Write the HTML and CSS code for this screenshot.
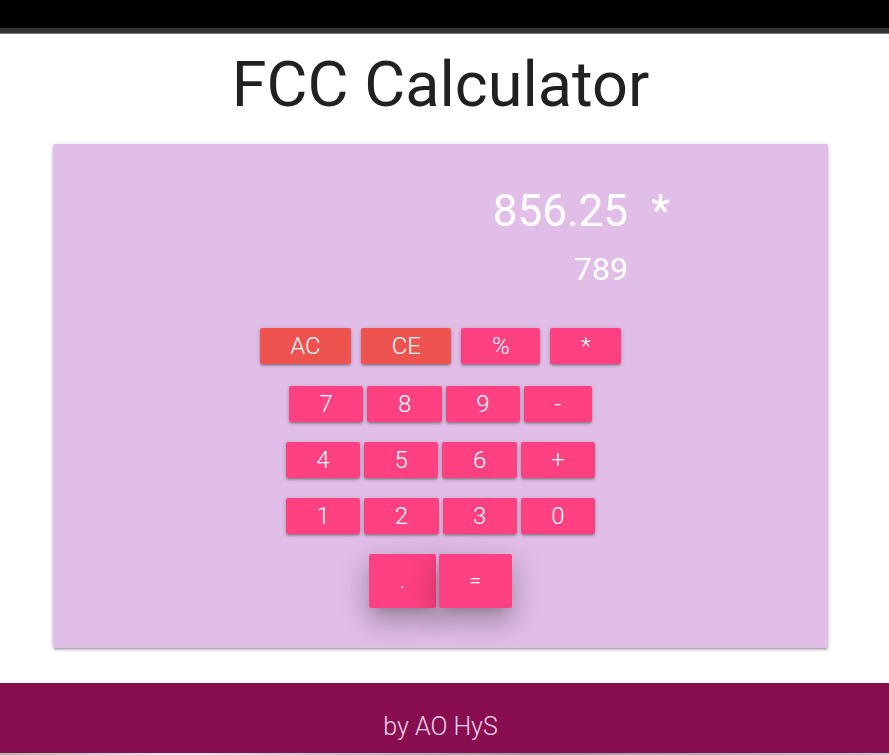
FILE: index.html
```html
<!DOCTYPE html>
<html lang="en">
<head>
<meta charset="utf-8">
<title>FCC Calculator</title>
<link rel="stylesheet" href="styles.css">
</head>
<body>
<div class="chrome">
  <div class="chrome-top"></div>
  <div class="chrome-band"></div>
  <div class="chrome-line"></div>
</div>
<main class="page">
  <h1 class="title">FCC Calculator</h1>
  <section class="card">
    <div class="display">
      <span class="value main">856.25</span>
      <span class="operator">*</span>
      <span class="value sub">789</span>
    </div>
    <div class="keys">
      <div class="row row-top">
        <button class="btn btn-red">AC</button>
        <button class="btn btn-red">CE</button>
        <button class="btn">%</button>
        <button class="btn">*</button>
      </div>
      <div class="row">
        <button class="btn">7</button>
        <button class="btn">8</button>
        <button class="btn">9</button>
        <button class="btn">-</button>
      </div>
      <div class="row">
        <button class="btn">4</button>
        <button class="btn">5</button>
        <button class="btn">6</button>
        <button class="btn">+</button>
      </div>
      <div class="row">
        <button class="btn">1</button>
        <button class="btn">2</button>
        <button class="btn">3</button>
        <button class="btn">0</button>
      </div>
      <div class="row row-last">
        <button class="btn btn-big">.</button>
        <button class="btn btn-big">=</button>
      </div>
    </div>
  </section>
</main>
<footer class="footer">
  <p class="credit">by AO HyS</p>
</footer>
<div class="taskbar"></div>
</body>
</html>
```

FILE: styles.css
```css
html, body {
  margin: 0;
  padding: 0;
  height: 755px;
  overflow: hidden;
  background: #ffffff;
  font-family: Roboto, "Liberation Sans", sans-serif;
}

.chrome-top {
  height: 28px;
  background: #000000;
}
.chrome-band {
  height: 5px;
  background: #353535;
}
.chrome-line {
  height: 1px;
  background: #7a7a7a;
}

.page {
  padding: 0 61px 0 53px;
}

.title {
  margin: 11px 0 20px;
  font-size: 63px;
  line-height: 79px;
  font-weight: 400;
  text-align: center;
  color: rgba(0, 0, 0, 0.87);
}

.card {
  background: #e1bee7;
  border-radius: 2px;
  height: 504px;
  box-sizing: border-box;
  padding-top: 41px;
  box-shadow: 0 2px 2px 0 rgba(0,0,0,0.14), 0 3px 1px -2px rgba(0,0,0,0.12), 0 1px 5px 0 rgba(0,0,0,0.2);
}

.display {
  display: grid;
  grid-template-columns: 1fr auto 200px;
  grid-template-rows: 52.8px 38.4px;
  row-gap: 12px;
  color: #ffffff;
}

.value {
  grid-column: 2;
  text-align: right;
}
.main {
  grid-row: 1;
  font-size: 44px;
  line-height: 52.8px;
}
.sub {
  grid-row: 2;
  font-size: 32px;
  line-height: 38.4px;
}
.operator {
  grid-column: 3;
  grid-row: 1;
  font-size: 44px;
  line-height: 52.8px;
  padding-left: 23px;
}

.keys {
  margin-top: 40px;
  display: flex;
  flex-direction: column;
  gap: 20px;
}

.row {
  display: flex;
  justify-content: center;
  gap: 4px;
}
.row-top {
  gap: 10px;
  margin-bottom: 2px;
}
.row-last {
  gap: 3px;
}

.btn {
  border: none;
  border-radius: 2px;
  height: 36px;
  padding: 0 30.5px;
  margin: 0;
  background: #ff4081;
  color: #ffffff;
  font-family: Roboto, "Liberation Sans", sans-serif;
  font-size: 24px;
  font-weight: 300;
  line-height: 36px;
  box-shadow: 0 2px 2px 0 rgba(0,0,0,0.14), 0 3px 1px -2px rgba(0,0,0,0.12), 0 1px 5px 0 rgba(0,0,0,0.2);
  cursor: pointer;
}
.btn-red {
  background: #ef5350;
}
.btn-big {
  height: 54px;
  line-height: 54px;
  font-size: 22px;
  box-shadow: 0 16px 24px 2px rgba(0,0,0,0.14), 0 6px 30px 5px rgba(0,0,0,0.12), 0 8px 10px -7px rgba(0,0,0,0.2);
}

.footer {
  margin-top: 35px;
  height: 70px;
  background: #880e4f;
  box-sizing: border-box;
  padding-top: 28px;
}
.credit {
  margin: 0;
  text-align: center;
  font-size: 25px;
  line-height: 32px;
  font-weight: 300;
  color: #f3d3ea;
  padding-right: 8px;
}

.taskbar {
  height: 2px;
  background: linear-gradient(to right, #b8b4b0, #e8e8e8 20%, #9a9a9a 60%, #c8c8c8);
}
```
